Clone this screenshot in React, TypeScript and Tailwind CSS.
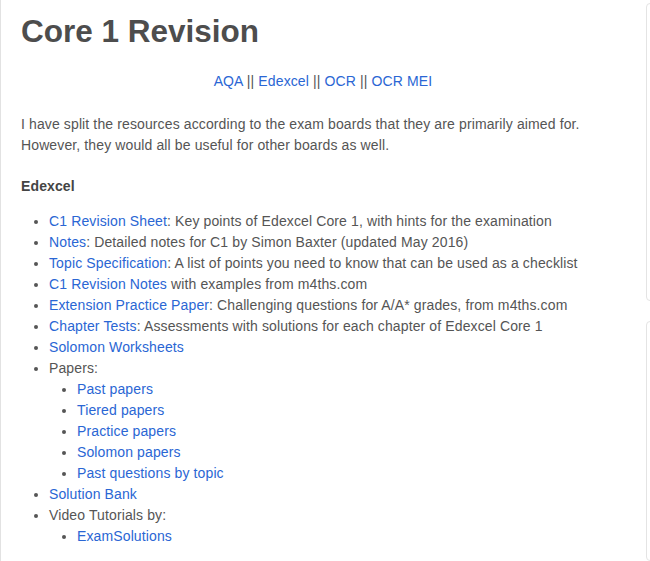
import React from "react";

const A = ({ children }: { children: React.ReactNode }) => (
  <a href="#" className="text-[#2a66d4] no-underline">
    {children}
  </a>
);

export default function App() {
  return (
    <div
      className="flex w-[650px] h-[561px] overflow-hidden bg-white text-[14px] leading-[21px] tracking-[0.12px] text-[#555]"
      style={{ fontFamily: '"Liberation Sans", Arial, sans-serif' }}
    >
      <main className="w-[646px] shrink-0 border-l border-[#e2e2e2] pl-[20px] pr-[21px]">
        <h1 className="mt-[12px] text-[31.5px] leading-[38px] font-bold tracking-normal text-[#4d4d4d]">
          Core 1 Revision
        </h1>
        <p className="mt-[21px] text-center">
          <A>AQA</A> || <A>Edexcel</A> || <A>OCR</A> || <A>OCR MEI</A>
        </p>
        <p className="mt-[22px]">
          I have split the resources according to the exam boards that they are primarily aimed for.
          <br />
          However, they would all be useful for other boards as well.
        </p>
        <p className="mt-[20px] font-bold text-[#444]">Edexcel</p>
        <ul className="mt-[14px] list-disc pl-[28px]">
          <li>
            <A>C1 Revision Sheet</A>: Key points of Edexcel Core 1, with hints for the examination
          </li>
          <li>
            <A>Notes</A>: Detailed notes for C1 by Simon Baxter (updated May 2016)
          </li>
          <li>
            <A>Topic Specification</A>: A list of points you need to know that can be used as a checklist
          </li>
          <li>
            <A>C1 Revision Notes</A> with examples from m4ths.com
          </li>
          <li>
            <A>Extension Practice Paper</A>: Challenging questions for A/A* grades, from m4ths.com
          </li>
          <li>
            <A>Chapter Tests</A>: Assessments with solutions for each chapter of Edexcel Core 1
          </li>
          <li>
            <A>Solomon Worksheets</A>
          </li>
          <li>
            Papers:
            <ul className="list-disc pl-[28px]">
              <li>
                <A>Past papers</A>
              </li>
              <li>
                <A>Tiered papers</A>
              </li>
              <li>
                <A>Practice papers</A>
              </li>
              <li>
                <A>Solomon papers</A>
              </li>
              <li>
                <A>Past questions by topic</A>
              </li>
            </ul>
          </li>
          <li>
            <A>Solution Bank</A>
          </li>
          <li>
            Video Tutorials by:
            <ul className="list-disc pl-[28px]">
              <li>
                <A>ExamSolutions</A>
              </li>
            </ul>
          </li>
        </ul>
      </main>
      <aside className="flex w-[200px] shrink-0 flex-col">
        <div className="mt-[3px] h-[298px] rounded-[4px] border border-[#e4e4e4] bg-white" />
        <div className="mt-[20px] flex-1 rounded-[4px] border border-[#e4e4e4] bg-white" />
      </aside>
    </div>
  );
}
